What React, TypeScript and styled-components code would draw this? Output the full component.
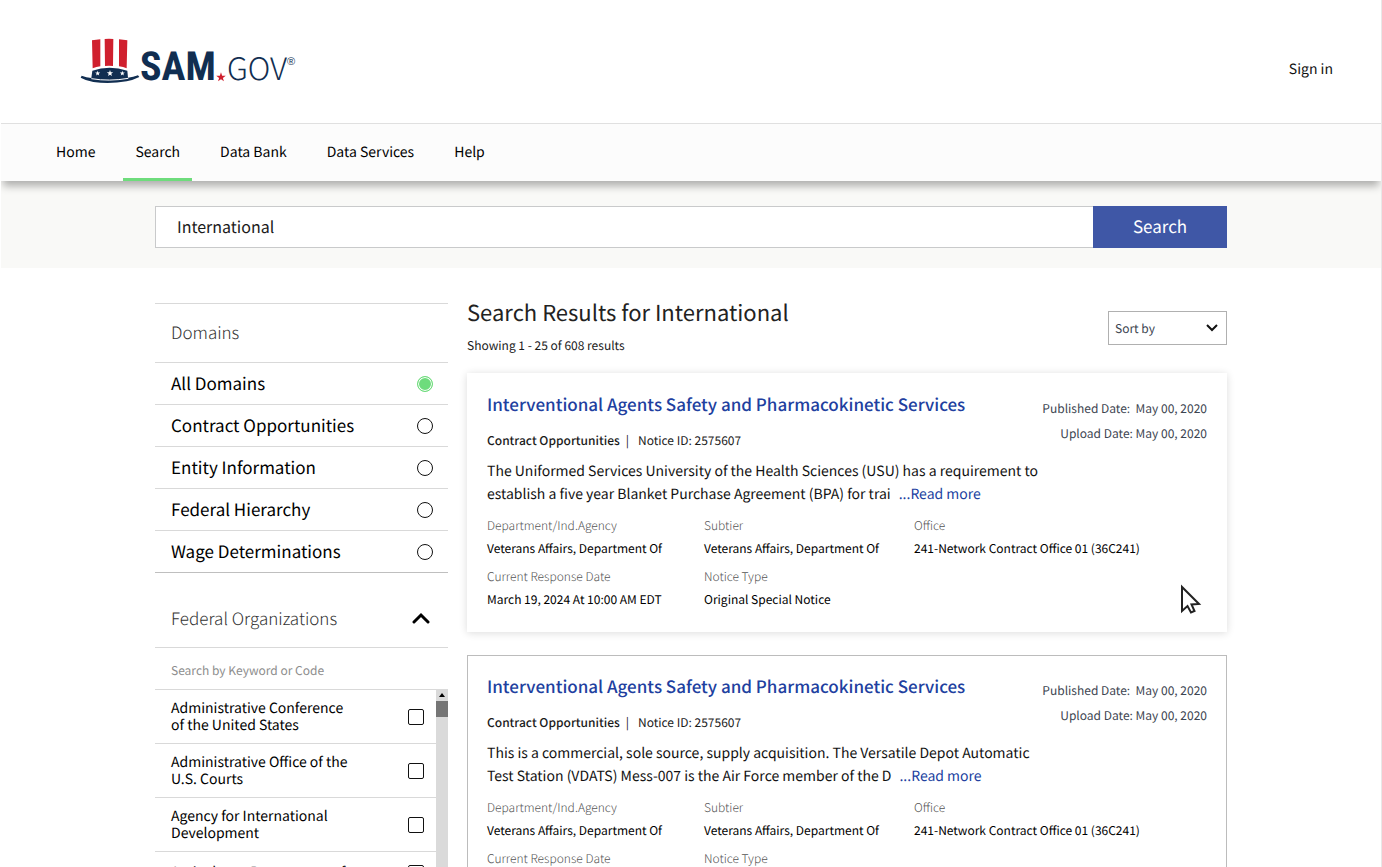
import React from "react";
import styled, { createGlobalStyle, css } from "styled-components";

const GlobalStyle = createGlobalStyle`
  *, *::before, *::after { box-sizing: border-box; }
  body {
    margin: 0;
    background: #ffffff;
    color: #1b1b1b;
    font-family: "Noto Sans CJK SC", "Noto Sans", sans-serif;
    font-size: 14px;
    text-rendering: geometricPrecision;
  }
  button, input, select { font-family: inherit; color: inherit; text-rendering: inherit; }
  h1, h2, p, dl, dd, ul, fieldset { margin: 0; padding: 0; }
  fieldset { border: 0; min-width: 0; }
  ul { list-style: none; }
`;

const Page = styled.div`
  height: 100vh;
  overflow: hidden;
  border-left: 1px solid #ffffff;
  border-right: 1px solid #e8e8e8;
  background: #ffffff;
`;

const Header = styled.header`
  display: flex;
  align-items: center;
  justify-content: space-between;
  height: 124px;
  padding: 0 48px 0 79px;
  border-bottom: 1px solid #e0e0e0;
`;

const SignIn = styled.a`
  padding-top: 15px;
  color: #111111;
  font-size: 14px;
  line-height: 20px;
  text-decoration: none;
`;

const Nav = styled.nav`
  position: relative;
  display: flex;
  gap: 16px;
  height: 57px;
  padding-left: 43px;
  background: #fcfcfc;
  box-shadow: 0 7px 8px -2px rgba(0, 0, 0, 0.3);
`;

const NavLink = styled.a<{ $active?: boolean }>`
  padding: 18px 12px 0;
  border-bottom: 3px solid ${(p) => (p.$active ? "#6edc7c" : "transparent")};
  color: #000000;
  font-size: 14px;
  line-height: 20px;
  text-decoration: none;
`;

const SearchBand = styled.div`
  padding: 25px 24px 20px;
  background: #f9f9f7;
`;

const SearchForm = styled.form`
  display: flex;
  height: 42px;
  max-width: 1072px;
  margin: 0 auto;
`;

const SearchInput = styled.input`
  flex: 1;
  min-width: 0;
  padding: 0 21px 2px;
  border: 1px solid #c9cacb;
  border-right: 0;
  border-radius: 0;
  background: #ffffff;
  font-size: 16px;
  outline: none;
`;

const SearchButton = styled.button`
  width: 134px;
  padding: 0 0 2px;
  border: 0;
  background: #3f57a6;
  color: #ffffff;
  font-size: 17px;
  line-height: 24px;
`;

const Main = styled.main`
  display: grid;
  grid-template-columns: 293px minmax(0, 1fr);
  column-gap: 19px;
  align-items: start;
  max-width: 1120px;
  margin: 0 auto;
  padding: 27px 24px 0;
`;

const Sidebar = styled.aside`
  margin-top: 8px;
`;

const DomainGroup = styled.fieldset`
  border-top: 1px solid #d9d9d9;
  border-bottom: 1px solid #bfbfbf;
`;

const GroupTitle = styled.h2`
  flex: 1;
  color: #333333;
  font-size: 17px;
  font-weight: 300;
  line-height: 24px;
`;

const DomainTitle = styled(GroupTitle)`
  padding: 16px 16px 18px;
`;

const DomainRow = styled.label`
  display: flex;
  align-items: center;
  justify-content: space-between;
  height: 42px;
  padding: 0 15px 0 16px;
  border-top: 1px solid #d9d9d9;
  color: #000000;
  font-size: 17px;
  line-height: 24px;
`;

const DomainName = styled.span`
  padding-bottom: 2px;
`;

const Radio = styled.input`
  appearance: none;
  width: 16px;
  height: 16px;
  margin: 0;
  border: 1px solid #111111;
  border-radius: 50%;
  background: #ffffff;

  &:checked {
    border-color: #6edc7c;
    background: #6edc7c;
    box-shadow: inset 0 0 0 1px #ffffff;
  }
`;

const OrgHeader = styled.div`
  display: flex;
  align-items: center;
  height: 74px;
  padding: 15px 16px 0;
`;

const CollapseButton = styled.button`
  display: flex;
  width: 22px;
  height: 22px;
  align-items: center;
  justify-content: center;
  padding: 0;
  border: 0;
  background: none;
  color: #000000;
`;

const OrgSearch = styled.input`
  display: block;
  width: 100%;
  height: 43px;
  padding: 4px 16px 0;
  border: 0;
  border-top: 1px solid #d9d9d9;
  border-bottom: 1px solid #d9d9d9;
  background: none;
  font-size: 12px;
  outline: none;

  &::placeholder { color: #8d8d8d; opacity: 1; }
`;

const OrgScroller = styled.div`
  display: flex;
  height: 240px;
  margin-top: -1px;
  overflow: hidden;
`;

const OrgList = styled.ul`
  flex: 1;
  border-top: 1px solid #d9d9d9;
`;

const OrgRow = styled.label`
  display: flex;
  align-items: center;
  justify-content: space-between;
  min-height: 41px;
  padding: 10px 12px 9px 16px;
  border-bottom: 1px solid #d9d9d9;
  color: #000000;
  font-size: 14px;
  line-height: 17px;
`;

const Checkbox = styled.input`
  appearance: none;
  width: 16px;
  height: 16px;
  margin: 0;
  border: 1px solid #111111;
  border-radius: 2px;
  background: #ffffff;
`;

const ScrollTrack = styled.div`
  width: 12px;
  background: #dadada;
`;

const ScrollArrow = styled.svg`
  display: block;
  width: 12px;
  height: 12px;
`;

const ScrollThumb = styled.div`
  height: 16px;
  background: #757575;
`;

const ResultsHeader = styled.div`
  display: flex;
  justify-content: space-between;
  align-items: flex-start;
  height: 78px;
`;

const ResultsTitle = styled.h1`
  padding-top: 1px;
  color: #222222;
  font-size: 22px;
  font-weight: 400;
  line-height: 32px;
`;

const ResultsCount = styled.p`
  margin-top: 8px;
  font-size: 12px;
  line-height: 20px;
`;

const SortBox = styled.div`
  position: relative;
  margin-top: 16px;
`;

const SortSelect = styled.select`
  appearance: none;
  display: block;
  width: 119px;
  height: 34px;
  padding: 1px 24px 0 6px;
  border: 1px solid #b0b0b0;
  border-radius: 0;
  background: #ffffff;
  color: #3d4551;
  font-size: 12px;
`;

const SortChevron = styled.svg`
  position: absolute;
  top: 11px;
  right: 9px;
  pointer-events: none;
`;

const CardList = styled.div`
  display: grid;
  gap: 23px;
`;

const Card = styled.article<{ $raised?: boolean }>`
  position: relative;
  padding: 18px 19px 20px;
  border: 1px solid #bcbcbc;
  background: #ffffff;
  ${(p) =>
    p.$raised &&
    css`
      border-color: #ffffff;
      box-shadow: 0 1px 8px rgba(0, 0, 0, 0.14);
    `}
`;

const CardTop = styled.div`
  display: flex;
  justify-content: space-between;
`;

const CardTitle = styled.h2`
  font-size: 17px;
  font-weight: 500;
  line-height: 24px;
`;

const TitleLink = styled.a`
  color: #213f9f;
  text-decoration: none;
`;

const Meta = styled.p`
  display: flex;
  margin-top: 15px;
  font-size: 12px;
  line-height: 20px;
`;

const Category = styled.strong`
  padding-right: 6px;
  font-weight: 500;
`;

const NoticeId = styled.span`
  padding-left: 9px;
`;

const Description = styled.p`
  margin-top: 9px;
  color: #111111;
  font-size: 14px;
  line-height: 23px;
`;

const ReadMore = styled.a`
  margin-left: 8px;
  color: #213f9f;
  text-decoration: none;
`;

const Dates = styled.div`
  padding-top: 4px;
  color: #3d4551;
  font-size: 12px;
  line-height: 25px;
  text-align: right;
  white-space: pre;
`;

const Details = styled.dl`
  display: grid;
  grid-template-columns: 217px 210px 1fr;
  row-gap: 5px;
  margin-top: 8px;
  font-size: 12px;
  line-height: 23px;
`;

const DetailLabel = styled.dt`
  color: #555555;
  font-weight: 300;
`;

const DetailValue = styled.dd`
  color: #000000;
`;

const Pointer = styled.svg`
  position: absolute;
  right: 24px;
  bottom: 15px;
`;

const LogoMark = styled.svg`
  display: block;
  overflow: visible;
`;

const NAVY = "#112e51";
const RED = "#d0202e";

const star = (cx: number, cy: number, r: number) =>
  Array.from({ length: 10 }, (_, i) => {
    const a = (Math.PI / 5) * i - Math.PI / 2;
    const d = i % 2 ? r * 0.4 : r;
    return `${(cx + d * Math.cos(a)).toFixed(1)},${(cy + d * Math.sin(a)).toFixed(1)}`;
  }).join(" ");

function Logo() {
  return (
    <LogoMark width="220" height="50" viewBox="0 0 220 50" role="img" aria-label="SAM.gov">
      <g transform="scale(0.3333) translate(-30 -21)">
        <path d="M66 31 Q78 29 91 28 L91 109 Q79 111 68 115 Z" fill={RED} />
        <path d="M104 27 Q117 26 130 27 L129 108 Q117 107 105 108 Z" fill={RED} />
        <path d="M147 28 Q160 29 172 31 L170 115 Q160 111 147 109 Z" fill={RED} />
        <path
          d="M67 122 Q118 104 172 122 L174 143 Q190 141 204 136 L208 141 Q190 150 170 154 Q118 163 70 156 Q50 153 32 143 L35 137 Q49 142 64 144 Z"
          fill={NAVY}
        />
        <path d="M64 146 Q118 155 175 145" fill="none" stroke="#fff" strokeWidth="3" />
        <polygon points={star(83, 130, 8)} fill="#fff" />
        <polygon points={star(120, 130, 10)} fill="#fff" />
        <polygon points={star(157, 130, 8)} fill="#fff" />
        <polygon points={star(453, 142, 15)} fill={RED} />
      </g>
      <text x="60" y="43" fill={NAVY} fontFamily='"Roboto Condensed", "Open Sans Condensed", "Noto Sans Condensed", "Noto Sans CJK SC", sans-serif' fontWeight="700" fontSize="40">
        SAM
      </text>
      <text x="147" y="43" fill={NAVY} fontFamily='"Noto Sans CJK SC", sans-serif' fontWeight="300" fontSize="31">
        GOV
      </text>
      <text x="207" y="28" fill={NAVY} fontFamily='"Liberation Sans", sans-serif' fontSize="11">
        ®
      </text>
    </LogoMark>
  );
}

const navItems = ["Home", "Search", "Data Bank", "Data Services", "Help"];

const domains = [
  "All Domains",
  "Contract Opportunities",
  "Entity Information",
  "Federal Hierarchy",
  "Wage Determinations",
];

const organizations = [
  ["Administrative Conference", "of the United States"],
  ["Administrative Office of the", "U.S. Courts"],
  ["Agency for International", "Development"],
  ["Agriculture, Department of"],
];

const details = [
  ["Department/Ind.Agency", "Veterans Affairs, Department Of"],
  ["Subtier", "Veterans Affairs, Department Of"],
  ["Office", "241-Network Contract Office 01 (36C241)"],
  ["Current Response Date", "March 19, 2024 At 10:00 AM EDT"],
  ["Notice Type", "Original Special Notice"],
];

const results = [
  [
    "The Uniformed Services University of the Health Sciences (USU) has a requirement to",
    "establish a five year Blanket Purchase Agreement (BPA) for trai",
  ],
  [
    "This is a commercial, sole source, supply acquisition. The Versatile Depot Automatic",
    "Test Station (VDATS) Mess-007 is the Air Force member of the D",
  ],
];

function ResultCard({ lines, raised }: { lines: string[]; raised?: boolean }) {
  return (
    <Card $raised={raised}>
      <CardTop>
        <div>
          <CardTitle>
            <TitleLink href="#notice">Interventional Agents Safety and Pharmacokinetic Services</TitleLink>
          </CardTitle>
          <Meta>
            <Category>Contract Opportunities</Category>|<NoticeId>Notice ID: 2575607</NoticeId>
          </Meta>
          <Description>
            {lines[0]}
            <br />
            {lines[1]}
            <ReadMore href="#more">...Read more</ReadMore>
          </Description>
        </div>
        <Dates>
          <div>{"Published Date:  May 00, 2020"}</div>
          <div>Upload Date: May 00, 2020</div>
        </Dates>
      </CardTop>
      <Details>
        {details.map(([label, value]) => (
          <div key={label}>
            <DetailLabel>{label}</DetailLabel>
            <DetailValue>{value}</DetailValue>
          </div>
        ))}
      </Details>
      {raised && (
        <Pointer width="24" height="32" viewBox="0 0 24 32" aria-hidden="true">
          <path
            d="M4 3 V27 L9.500 22 L13 28.500 L16.500 27 L13.500 20.500 L21 20 Z"
            fill="#fff"
            stroke="#222"
            strokeWidth="2"
          />
        </Pointer>
      )}
    </Card>
  );
}

export default function App() {
  return (
    <Page>
      <GlobalStyle />
      <Header>
        <Logo />
        <SignIn href="#signin">Sign in</SignIn>
      </Header>
      <Nav>
        {navItems.map((item) => (
          <NavLink key={item} href="#nav" $active={item === "Search"}>
            {item}
          </NavLink>
        ))}
      </Nav>
      <SearchBand>
        <SearchForm onSubmit={(e) => e.preventDefault()}>
          <SearchInput aria-label="Search" defaultValue="International" />
          <SearchButton type="submit">Search</SearchButton>
        </SearchForm>
      </SearchBand>
      <Main>
        <Sidebar>
          <DomainGroup aria-label="Domains">
            <DomainTitle>Domains</DomainTitle>
            {domains.map((name, i) => (
              <DomainRow key={name}>
                <DomainName>{name}</DomainName>
                <Radio type="radio" name="domain" defaultChecked={i === 0} />
              </DomainRow>
            ))}
          </DomainGroup>
          <OrgHeader>
            <GroupTitle>Federal Organizations</GroupTitle>
            <CollapseButton type="button" aria-label="Collapse Federal Organizations">
              <svg width="18" height="12" viewBox="0 0 18 12" fill="none" stroke="currentColor" strokeWidth="3">
                <path d="M2 10 L9 3 L16 10" strokeLinecap="round" />
              </svg>
            </CollapseButton>
          </OrgHeader>
          <OrgSearch aria-label="Search organizations" placeholder="Search by Keyword or Code" />
          <OrgScroller>
            <OrgList>
              {organizations.map(([first, second]) => (
                <li key={first}>
                  <OrgRow>
                    <span>
                      {first}
                      {second && <br />}
                      {second}
                    </span>
                    <Checkbox type="checkbox" />
                  </OrgRow>
                </li>
              ))}
            </OrgList>
            <ScrollTrack>
              <ScrollArrow viewBox="0 0 12 12" aria-hidden="true">
                <path d="M6 4 L9 8 H3 Z" fill="#000" />
              </ScrollArrow>
              <ScrollThumb />
            </ScrollTrack>
          </OrgScroller>
        </Sidebar>
        <section>
          <ResultsHeader>
            <div>
              <ResultsTitle>Search Results for International</ResultsTitle>
              <ResultsCount>Showing 1 - 25 of 608 results</ResultsCount>
            </div>
            <SortBox>
              <SortSelect aria-label="Sort by" defaultValue="sort">
                <option value="sort">Sort by</option>
                <option value="date">Date</option>
              </SortSelect>
              <SortChevron width="12" height="12" viewBox="0 0 12 12" fill="none" stroke="#111" strokeWidth="2" aria-hidden="true">
                <path d="M1 3 L6 8 L11 3" />
              </SortChevron>
            </SortBox>
          </ResultsHeader>
          <CardList>
            {results.map((lines, i) => (
              <ResultCard key={lines[0]} lines={lines} raised={i === 0} />
            ))}
          </CardList>
        </section>
      </Main>
    </Page>
  );
}
